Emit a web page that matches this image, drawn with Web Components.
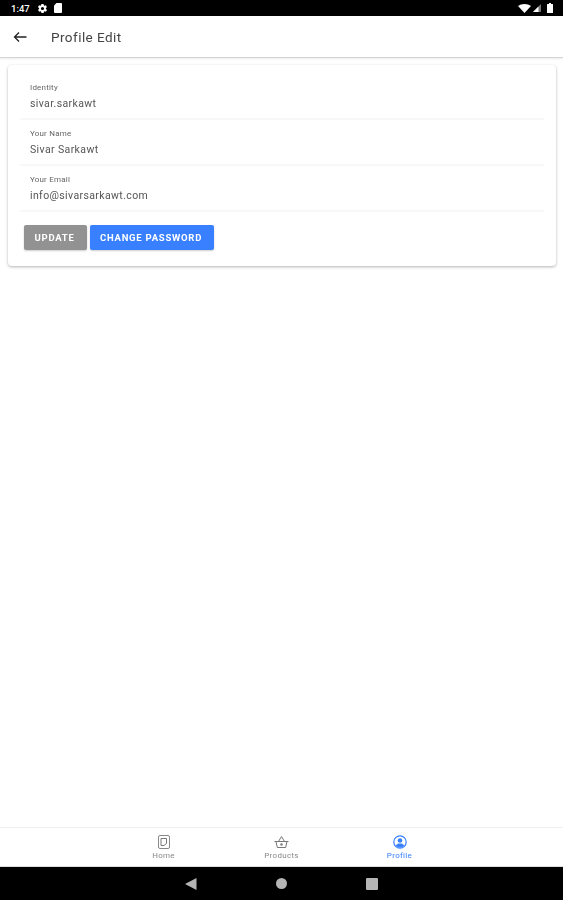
<!DOCTYPE html>
<html>
<head>
<meta charset="utf-8">
<title>Profile Edit</title>
<style>
  html, body { margin: 0; height: 100%; }
  body { font-family: Roboto, "Liberation Sans", sans-serif; background: #fff; }
  #app { display: flex; flex-direction: column; height: 900px; overflow: hidden; filter: blur(.45px); }
  main-area { flex: 1; }
</style>
</head>
<body>
<div id="app">
  <status-bar></status-bar>
  <app-header>Profile Edit</app-header>
  <main-area>
    <profile-card>
      <profile-field label="Identity" value="sivar.sarkawt"></profile-field>
      <profile-field label="Your Name" value="Sivar Sarkawt"></profile-field>
      <profile-field label="Your Email" value="info@sivarsarkawt.com"></profile-field>
      <div slot="actions">
        <action-button color="gray">UPDATE</action-button>
        <action-button color="blue">CHANGE PASSWORD</action-button>
      </div>
    </profile-card>
  </main-area>
  <bottom-nav></bottom-nav>
  <system-nav></system-nav>
</div>

<script>
class StatusBar extends HTMLElement {
    constructor() {
        super();
        const shadowRoot = this.attachShadow({ mode: 'open' });
        shadowRoot.innerHTML = `
        <style>
            :host { display: flex; align-items: center; height: 16px; background: #000; color: #fff; padding: 0 10px 0 11px; box-sizing: border-box; font-size: 9.5px; font-weight: 500; }
            svg { display: block; fill: #fff; }
            .left { display: flex; align-items: center; gap: 6px; }
            .time { margin-right: 1px; }
            .right { margin-left: auto; display: flex; align-items: center; gap: 2px; }
        </style>
        <div class="left">
            <span class="time">1:47</span>
            <svg width="11" height="11" viewBox="0 0 24 24"><path d="M19.4 13c0-.3.1-.6.1-1s0-.7-.1-1l2.1-1.6c.2-.2.2-.4.1-.6l-2-3.500c-.1-.2-.4-.3-.6-.2l-2.500 1c-.5-.4-1.100-.7-1.700-1l-.4-2.700c0-.2-.2-.4-.5-.4h-4c-.3 0-.5.2-.5.4l-.4 2.700c-.6.3-1.200.6-1.700 1l-2.500-1c-.2-.1-.5 0-.6.2l-2 3.500c-.1.2-.1.4.1.6L4.600 11c0 .3-.1.6-.1 1s0 .7.1 1l-2.100 1.600c-.2.2-.2.4-.1.6l2 3.500c.1.2.4.3.6.2l2.500-1c.5.4 1.100.7 1.700 1l.4 2.700c0 .2.2.4.5.4h4c.3 0 .5-.2.5-.4l.4-2.700c.6-.3 1.200-.6 1.700-1l2.500 1c.2.1.5 0 .6-.2l2-3.500c.1-.2.1-.4-.1-.6L19.400 13zM12 15.500c-1.900 0-3.500-1.600-3.500-3.500s1.600-3.500 3.500-3.500 3.500 1.600 3.500 3.500-1.600 3.500-3.500 3.500z"/></svg>
            <svg width="8" height="10" viewBox="0 0 8 10"><path d="M2.500 0H7a1 1 0 0 1 1 1v8a1 1 0 0 1-1 1H1a1 1 0 0 1-1-1V2.500z"/></svg>
        </div>
        <div class="right">
            <svg width="13" height="9" viewBox="0 0 13 9"><path d="M0 2C1.700.7 4 0 6.500 0S11.300.7 13 2L6.500 9z"/></svg>
            <svg width="8" height="8" viewBox="0 0 8 8"><path d="M8 0v8H0z" fill="#777"/><path d="M5.500 2.500V8H0z"/></svg>
            <svg width="6" height="10" viewBox="0 0 6 10" style="margin-left:4px"><path d="M2 0h2v1h1.500a.5.500 0 0 1 .5.500V10H0V1.500A.5.500 0 0 1 .5 1H2z"/></svg>
        </div>
        `;
    }
}
customElements.define('status-bar', StatusBar);

class AppHeader extends HTMLElement {
    constructor() {
        super();
        const shadowRoot = this.attachShadow({ mode: 'open' });
        shadowRoot.innerHTML = `
        <style>
            :host { display: flex; align-items: center; height: 41px; background: #fff; border-bottom: 1px solid #d4d4d4; box-shadow: 0 1px 2px rgba(0,0,0,.08); color: #444; font-size: 13.500px; letter-spacing: .45px; position: relative; }
            svg { margin-left: 13px; margin-right: 24px; display: block; }
        </style>
        <svg width="14" height="14" viewBox="0 0 14 14" fill="none" stroke="#222" stroke-width="1.300"><path d="M13.500 7H1.500M6 2.500 1.500 7 6 11.500"/></svg>
        <slot></slot>
        `;
    }
}
customElements.define('app-header', AppHeader);

class ProfileCard extends HTMLElement {
    constructor() {
        super();
        const shadowRoot = this.attachShadow({ mode: 'open' });
        shadowRoot.innerHTML = `
        <style>
            :host { display: block; margin: 7px 7px 0 8px; height: 201px; box-sizing: border-box; background: #fff; border-radius: 4px; box-shadow: 0 1px 3px rgba(0,0,0,.3); padding: 9px 12px 0; }
            .actions { padding: 13px 4px 0; }
            ::slotted([slot=actions]) { display: flex; gap: 3px; }
        </style>
        <slot></slot>
        <div class="actions"><slot name="actions"></slot></div>
        `;
    }
}
customElements.define('profile-card', ProfileCard);

class ProfileField extends HTMLElement {
    constructor() {
        super();
        const shadowRoot = this.attachShadow({ mode: 'open' });
        shadowRoot.innerHTML = `
        <style>
            :host { display: block; height: 46px; box-sizing: border-box; padding: 9px 10px 0; border-bottom: 2px solid #f8f8f8; color: #555; }
            .label { font-size: 8px; line-height: 10px; color: #666; letter-spacing: .2px; }
            .value { font-size: 10.500px; line-height: 14px; margin-top: 4px; letter-spacing: .38px; }
        </style>
        <div class="label">${this.getAttribute('label')}</div>
        <div class="value">${this.getAttribute('value')}</div>
        `;
    }
}
customElements.define('profile-field', ProfileField);

class ActionButton extends HTMLElement {
    constructor() {
        super();
        const shadowRoot = this.attachShadow({ mode: 'open' });
        const bg = this.getAttribute('color') === 'blue' ? '#3880ff' : '#929292';
        shadowRoot.innerHTML = `
        <style>
            :host { display: flex; align-items: center; height: 25px; padding: 0 12px 0 10.500px; background: ${bg}; color: #fff; border-radius: 2px; font-size: 9.500px; font-weight: 700; letter-spacing: .75px; box-shadow: 0 1px 2px rgba(0,0,0,.2); }
        </style>
        <slot></slot>
        `;
    }
}
customElements.define('action-button', ActionButton);

class BottomNav extends HTMLElement {
    constructor() {
        super();
        const shadowRoot = this.attachShadow({ mode: 'open' });
        shadowRoot.innerHTML = `
        <style>
            :host { display: flex; justify-content: center; height: 40px; box-sizing: border-box; background: #fff; border-top: 1px solid #f0f0f0; border-bottom: 1px solid #ddd; }
            .tab { width: 118px; display: flex; flex-direction: column; align-items: center; padding-top: 7px; box-sizing: border-box; font-size: 8px; line-height: 10px; letter-spacing: .3px; color: #888; gap: 2px; }
            .tab.active { color: #3880ff; }
            svg { display: block; }
        </style>
        <div class="tab">
            <svg width="14" height="14" viewBox="0 0 14 14" fill="none" stroke="#888" stroke-width="1"><rect x="1.500" y=".5" width="11" height="13" rx="1.500"/><path d="M4 3.500h5.500v5L7 10.500H4z" stroke="#777"/></svg>
            <span>Home</span>
        </div>
        <div class="tab">
            <svg width="15" height="14" viewBox="0 0 15 14" fill="none" stroke="#777" stroke-width="1"><path d="M.5 6.500h14M2 6.500l1.300 6h8.400l1.300-6M4.500 6.500l3-5 3 5"/><circle cx="7.500" cy="9.500" r="1.200" fill="#777" stroke="none"/></svg>
            <span>Products</span>
        </div>
        <div class="tab active">
            <svg width="14" height="14" viewBox="0 0 14 14"><circle cx="7" cy="7" r="6.200" fill="none" stroke="#3880ff" stroke-width="1.200"/><circle cx="7" cy="5.500" r="2.300" fill="#3880ff"/><path d="M2.800 10.500C4 8.800 5.500 8.500 7 8.500s3 .3 4.200 2C10 12 8.500 12.500 7 12.500S4 12 2.800 10.500z" fill="#3880ff"/></svg>
            <span>Profile</span>
        </div>
        `;
    }
}
customElements.define('bottom-nav', BottomNav);

class SystemNav extends HTMLElement {
    constructor() {
        super();
        const shadowRoot = this.attachShadow({ mode: 'open' });
        shadowRoot.innerHTML = `
        <style>
            :host { display: flex; justify-content: center; align-items: center; gap: 79px; height: 33px; background: #000; }
            svg { display: block; fill: #b5b5b5; }
        </style>
        <svg width="12" height="12" viewBox="0 0 12 12"><path d="M11.500 0v12L0 6z"/></svg>
        <svg width="11" height="11" viewBox="0 0 11 11"><circle cx="5.500" cy="5.500" r="5.500"/></svg>
        <svg width="12" height="12" viewBox="0 0 12 12"><rect width="12" height="12" rx="1"/></svg>
        `;
    }
}
customElements.define('system-nav', SystemNav);
</script>
</body>
</html>
